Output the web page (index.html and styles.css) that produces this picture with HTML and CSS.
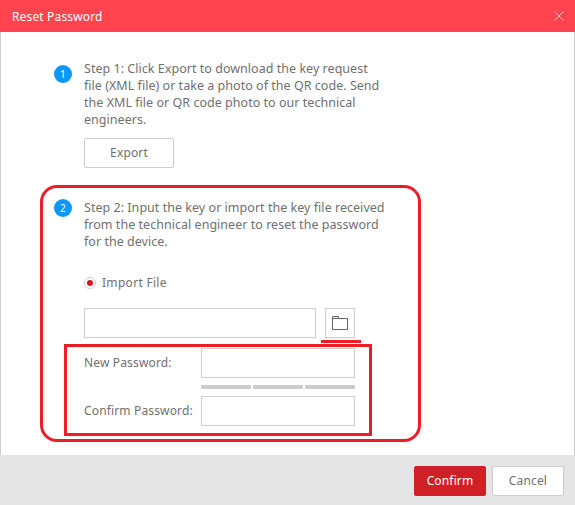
FILE: index.html
```html
<!DOCTYPE html>
<html lang="en">
<head>
<meta charset="utf-8">
<title>Reset Password</title>
<link rel="stylesheet" href="styles.css">
</head>
<body>
<div class="dialog">
  <header class="titlebar">
    <span class="title">Reset Password</span>
    <svg class="close" width="10" height="10" viewBox="0 0 10 10"><path d="M0.5 0.5L9.5 9.5M9.5 0.5L0.5 9.5" stroke="#f8c4c8" stroke-width="1" fill="none"/></svg>
  </header>
  <main class="content">
    <section class="step step-one">
      <span class="badge">1</span>
      <div class="step-body">
        <p class="step-text">Step 1: Click Export to download the key request file (XML file) or take a photo of the QR code. Send the XML file or QR code photo to our technical engineers.</p>
        <button class="btn export">Export</button>
      </div>
    </section>
    <section class="step step-two">
      <span class="badge">2</span>
      <div class="step-body">
        <p class="step-text">Step 2: Input the key or import the key file received from the technical engineer to reset the password for the device.</p>
        <label class="radio-row"><span class="radio"><span class="radio-dot"></span></span>Import File</label>
        <div class="file-row">
          <div class="field file-field"></div>
          <button class="folder-btn" aria-label="Browse">
            <svg width="16" height="14" viewBox="0 0 16 14"><path d="M0.5 13.5V0.5H6.5V2.5H15.5V13.5ZM0.5 2.5H6.5" stroke="#666" stroke-width="1" fill="none"/></svg>
          </button>
        </div>
        <div class="form-row new-row">
          <span class="form-label">New Password:</span>
          <div class="field pw-field"></div>
        </div>
        <div class="strength"><span></span><span></span><span></span></div>
        <div class="form-row">
          <span class="form-label">Confirm Password:</span>
          <div class="field pw-field"></div>
        </div>
      </div>
    </section>
  </main>
  <footer class="footer">
    <button class="btn primary">Confirm</button>
    <button class="btn cancel">Cancel</button>
  </footer>
</div>
<div class="mark mark-round"></div>
<div class="mark mark-line"></div>
<div class="mark mark-rect"></div>
</body>
</html>
```
FILE: styles.css
```css
* { box-sizing: border-box; }
html, body { margin: 0; padding: 0; }
body {
  width: 575px;
  height: 505px;
  position: relative;
  overflow: hidden;
  font-family: "Noto Sans", "Open Sans", "Liberation Sans", sans-serif;
  font-size: 12px;
  letter-spacing: 0.15px;
  color: #707070;
}
.dialog { width: 575px; height: 505px; display: flex; flex-direction: column; }
.titlebar {
  height: 32px;
  flex: none;
  background: #ff444f;
  color: #fff;
  display: flex;
  align-items: center;
  justify-content: space-between;
  padding: 0 11px 0 12px;
}
.title { font-size: 12px; }
.content {
  flex: 1;
  background: #fff;
  border-left: 1px solid #ccc;
  border-right: 1px solid #ccc;
  padding: 28px 0 0 53px;
}
.step { display: flex; gap: 12px; }
.badge {
  width: 18px;
  height: 18px;
  flex: none;
  margin-top: 5px;
  border-radius: 50%;
  background: #0c97fa;
  color: #fff;
  font-size: 10px;
  line-height: 18px;
  text-align: center;
}
.step-two .badge { margin-top: 0; }
.step-body { width: 304px; }
.step-text { margin: 0; font-size: 12.5px; letter-spacing: 0.03px; line-height: 17px; }
.btn {
  font: inherit;
  letter-spacing: inherit;
  height: 30px;
  width: 90px;
  background: #fff;
  color: #707070;
  border: 1px solid #ccc;
  border-radius: 2px;
  padding: 0 0 1px;
}
.export { display: block; margin-top: 10px; }
.step-two { margin-top: 31px; }
.radio-row { display: flex; align-items: center; gap: 6px; margin-top: 24px; height: 17px; letter-spacing: 0.3px; }
.radio {
  width: 12px;
  height: 12px;
  border: 1px solid #ccc;
  border-radius: 50%;
  display: flex;
  align-items: center;
  justify-content: center;
}
.radio-dot { width: 6px; height: 6px; background: #d01a20; border-radius: 50%; }
.field { height: 30px; border: 1px solid #ccc; background: #fff; }
.file-row { display: flex; gap: 9px; margin-top: 17px; }
.file-field { width: 232px; }
.folder-btn {
  width: 30px;
  height: 30px;
  padding: 0;
  background: #fff;
  border: 1px solid #ccc;
  display: flex;
  align-items: center;
  justify-content: center;
}
.form-row { display: flex; align-items: center; width: 271px; justify-content: space-between; }
.form-label { padding-bottom: 2px; }
.new-row { margin-top: 10px; }
.pw-field { width: 154px; }
.strength { display: flex; gap: 2px; width: 154px; margin: 7px 0 7px 117px; }
.strength span { flex: 1; height: 4px; background: #ccc; }
.footer {
  height: 50px;
  flex: none;
  background: #e5e5e5;
  display: flex;
  justify-content: flex-end;
  gap: 6px;
  padding: 11px 11px 0 0;
}
.footer .btn { width: 72px; }
.footer .primary { background: #d11f26; border-color: #d11f26; color: #fff; }
.mark { position: absolute; }
.mark-round { left: 40px; top: 185px; width: 381px; height: 257px; border: 3px solid #ee1c25; border-radius: 17px; }
.mark-line { left: 321px; top: 340px; width: 40px; height: 3px; background: #ee1c25; }
.mark-rect { left: 64px; top: 344px; width: 308px; height: 92px; border: 3px solid #ee1c25; }
```
